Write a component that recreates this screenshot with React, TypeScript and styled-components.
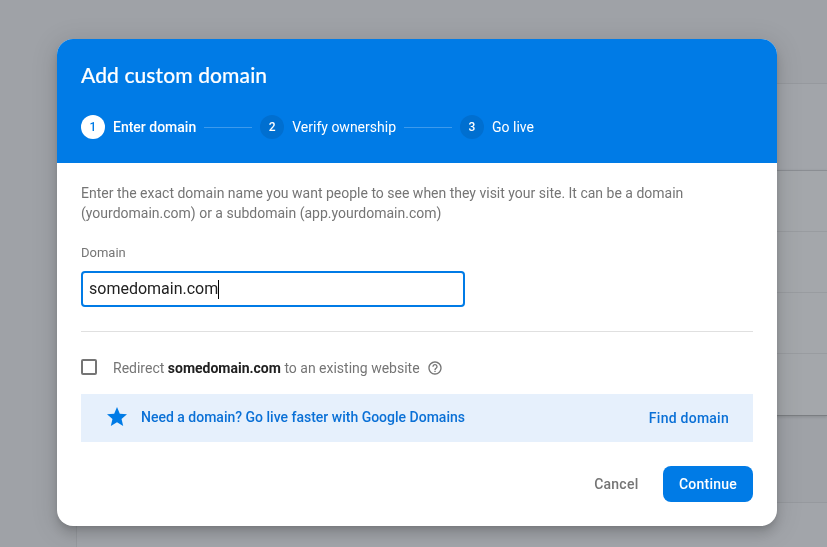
import React from 'react';
import styled, { createGlobalStyle, css } from 'styled-components';

const blue = '#007be6';

const GlobalStyle = createGlobalStyle`
  * { box-sizing: border-box; }
  body {
    margin: 0;
    font-family: Roboto, "Liberation Sans", sans-serif;
    font-size: 14px;
    line-height: 20px;
    color: #757575;
    background: #9fa2a7;
    overflow: hidden;
  }
`;

const Page = styled.div`
  height: 547px;
  padding: 83px 0 0 76px;
  overflow: hidden;
`;

const Panel = styled.section`
  border: 1px solid #96999e;
  border-right: 0;
  background: #a2a5aa;
  height: 88px;
`;

const Table = styled.section`
  border-top: 1px solid #8b8e93;
  border-bottom: 1px solid #7b7e82;
  margin-top: -1px;
  background: #a4a7ab;
  box-shadow: 0 1px 3px rgba(0, 0, 0, 0.14);
`;

const TableRow = styled.div`
  height: 61px;
  & + & { border-top: 1px solid #999ca0; }
  &:first-child { height: 60px; }
  &:last-child { height: 62px; }
`;

const LowerPanel = styled(Panel)`
  margin-top: 86px;
`;

const Scrim = styled.div`
  position: fixed;
  inset: 0;
  padding: 39px 50px 0 57px;
`;

const Dialog = styled.div`
  height: 487px;
  border-radius: 16px;
  overflow: hidden;
  background: #fff;
  box-shadow: 0 4px 6px -2px rgba(0, 0, 0, 0.14), 0 8px 12px 1px rgba(0, 0, 0, 0.1),
    0 4px 24px 4px rgba(0, 0, 0, 0.1);
`;

const Header = styled.header`
  height: 124px;
  padding: 24px 24px 0;
  background: ${blue};
  color: #fff;
`;

const Title = styled.h1`
  margin: 0;
  font-family: Lato, sans-serif;
  font-size: 21px;
  line-height: 24px;
  font-weight: 500;
  letter-spacing: 0.1px;
  -webkit-text-stroke: 0.15px #fff;
`;

const Steps = styled.ol`
  display: flex;
  align-items: center;
  gap: 8px;
  margin: 28px 0 0;
  padding: 0;
  list-style: none;
`;

const Step = styled.li<{ $active?: boolean }>`
  display: flex;
  align-items: center;
  gap: 8px;
  line-height: 24px;
  font-weight: ${(p) => (p.$active ? 500 : 400)};
`;

const StepNumber = styled.span<{ $active?: boolean }>`
  width: 24px;
  height: 24px;
  border-radius: 50%;
  text-align: center;
  font-size: 12px;
  font-weight: 500;
  ${(p) =>
    p.$active
      ? css`background: #fff; color: ${blue};`
      : css`background: #006fd0; color: #fff;`}
`;

const StepLine = styled.li`
  width: 48px;
  height: 1px;
  background: #3d9aec;
`;

const Body = styled.div`
  padding: 20px 24px 0;
`;

const Intro = styled.p`
  margin: 0;
`;

const FieldLabel = styled.div`
  margin-top: 20px;
  font-size: 13px;
  line-height: 20px;
`;

const Field = styled.div`
  display: flex;
  align-items: center;
  width: 384px;
  height: 36px;
  margin-top: 8px;
  padding: 0 6px;
  border: 2px solid ${blue};
  border-radius: 4px;
  font-size: 16px;
  color: #212121;
`;

const Caret = styled.span`
  width: 1px;
  height: 19px;
  background: #000;
`;

const Divider = styled.hr`
  height: 1px;
  margin: 24px 0 0;
  border: 0;
  background: #e0e0e0;
`;

const Redirect = styled.div`
  display: flex;
  align-items: center;
  height: 20px;
  margin-top: 26px;
  b { color: #212121; font-weight: 700; }
  svg { margin-left: 7px; }
`;

const Checkbox = styled.span`
  width: 16px;
  height: 16px;
  margin: -2px 16px 0 0;
  border: 2px solid #757575;
  border-radius: 2px;
`;

const Promo = styled.div`
  display: flex;
  align-items: center;
  height: 48px;
  margin-top: 16px;
  padding: 0 24px;
  background: #e6f0fc;
  color: #0a70d6;
  font-weight: 500;
  svg { margin: -2px 12px 0 0; }
`;

const PromoText = styled.span`
  flex: 1;
  margin-top: -2px;
`;

const TextButton = styled.button<{ $tone: string }>`
  padding: 0;
  border: 0;
  background: none;
  color: ${(p) => p.$tone};
  font: 500 14px/20px Roboto, sans-serif;
  letter-spacing: 0.25px;
`;

const Actions = styled.footer`
  display: flex;
  justify-content: flex-end;
  align-items: center;
  gap: 24.5px;
  margin-top: 24px;
`;

const PrimaryButton = styled(TextButton)`
  width: 90px;
  height: 36px;
  border-radius: 8px;
  background: ${blue};
`;

const StarIcon = () => (
  <svg width="24" height="24" viewBox="0 0 24 24" fill={blue}>
    <path d="M12 17.27 18.18 21l-1.64-7.03L22 9.24l-7.19-.61L12 2 9.19 8.63 2 9.24l5.46 4.73L5.82 21z" />
  </svg>
);

const HelpIcon = () => (
  <svg width="16" height="16" viewBox="0 0 24 24" fill="#757575">
    <path d="M11 18h2v-2h-2v2zm1-16C6.48 2 2 6.48 2 12s4.48 10 10 10 10-4.480 10-10S17.520 2 12 2zm0 18c-4.410 0-8-3.590-8-8s3.590-8 8-8 8 3.590 8 8-3.590 8-8 8zm0-14c-2.210 0-4 1.790-4 4h2c0-1.100.9-2 2-2s2 .9 2 2c0 2-3 1.750-3 5h2c0-2.250 3-2.500 3-5 0-2.210-1.790-4-4-4z" />
  </svg>
);

export default function App() {
  return (
    <>
      <GlobalStyle />
      <Page>
        <Panel />
        <Table>
          <TableRow />
          <TableRow />
          <TableRow />
          <TableRow />
        </Table>
        <LowerPanel />
      </Page>
      <Scrim>
        <Dialog role="dialog" aria-modal="true">
          <Header>
            <Title>Add custom domain</Title>
            <Steps>
              <Step $active><StepNumber $active>1</StepNumber>Enter domain</Step>
              <StepLine />
              <Step><StepNumber>2</StepNumber>Verify ownership</Step>
              <StepLine />
              <Step><StepNumber>3</StepNumber>Go live</Step>
            </Steps>
          </Header>
          <Body>
            <Intro>
              Enter the exact domain name you want people to see when they visit your site. It can be a domain
              (yourdomain.com) or a subdomain (app.yourdomain.com)
            </Intro>
            <FieldLabel>Domain</FieldLabel>
            <Field role="textbox">somedomain.com<Caret /></Field>
            <Divider />
            <Redirect>
              <Checkbox role="checkbox" />
              <span>Redirect <b>somedomain.com</b> to an existing website</span>
              <HelpIcon />
            </Redirect>
            <Promo>
              <StarIcon />
              <PromoText>Need a domain? Go live faster with Google Domains</PromoText>
              <TextButton $tone="#0a70d6">Find domain</TextButton>
            </Promo>
            <Actions>
              <TextButton $tone="#757575">Cancel</TextButton>
              <PrimaryButton $tone="#fff">Continue</PrimaryButton>
            </Actions>
          </Body>
        </Dialog>
      </Scrim>
    </>
  );
}
